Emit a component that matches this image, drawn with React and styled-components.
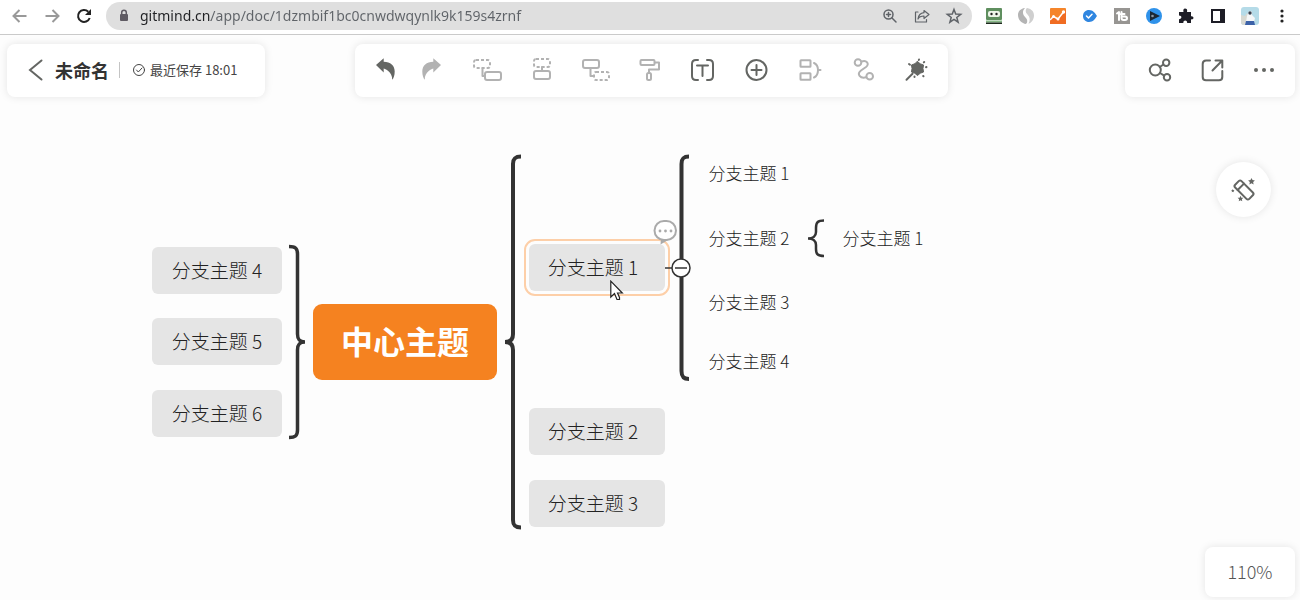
import React from "react";
import styled, { createGlobalStyle, css } from "styled-components";

const GlobalStyle = createGlobalStyle`
  *, *::before, *::after { box-sizing: border-box; }
  html, body, #root { height: 100%; }
  body {
    margin: 0;
    background: #fdfdfd;
    color: #222;
    font-family: "Noto Sans CJK SC", "Noto Sans", sans-serif;
  }
  button { font: inherit; }
`;

const Page = styled.div`
  display: flex;
  flex-direction: column;
  min-height: 100%;
`;

/* ---------- browser bar ---------- */

const BrowserBar = styled.header`
  display: flex;
  align-items: center;
  gap: 6px;
  height: 35px;
  padding: 0 2px 2px 4px;
  background: #fff;
  border-bottom: 1px solid #cacaca;
`;

const Cluster = styled.div`
  display: flex;
  align-items: center;
`;

const ChromeButton = styled.button`
  display: flex;
  align-items: center;
  justify-content: center;
  width: 32px;
  height: 28px;
  padding: 0;
  border: 0;
  background: none;
  color: ${(p) => p.$color || "#5f6368"};
`;

const Omnibox = styled.div`
  display: flex;
  flex: 1;
  align-items: center;
  min-width: 0;
  height: 28px;
  padding: 0 2px 0 10px;
  border-radius: 14px;
  background: #dfdfdf;
`;

const Address = styled.input`
  flex: 1;
  min-width: 0;
  height: 24px;
  margin-left: 8px;
  padding: 0 0 2px;
  border: 0;
  outline: 0;
  background: linear-gradient(90deg, #202124 71px, #5f6368 71px);
  background-clip: text;
  -webkit-text-fill-color: transparent;
  color: #5f6368;
  font-family: "Noto Sans", sans-serif;
  font-size: 14px;
`;

/* ---------- editor ---------- */

const Editor = styled.main`
  position: relative;
  flex: 1;
  overflow: hidden;
`;

const floating = css`
  background: #fff;
  box-shadow: 0 0 8px rgba(0, 0, 0, 0.1);
`;

const TopBars = styled.div`
  position: absolute;
  top: 9px;
  left: 7px;
  right: 5px;
  display: flex;
  justify-content: space-between;
`;

const Side = styled.div`
  display: flex;
  flex: 1 1 0;
  justify-content: ${(p) => (p.$end ? "flex-end" : "flex-start")};
`;

const Card = styled.div`
  ${floating}
  display: flex;
  align-items: center;
  height: 53px;
  padding: ${(p) => p.$pad};
  border-radius: 8px;
`;

const ToolButton = styled.button`
  display: flex;
  align-items: center;
  justify-content: center;
  width: ${(p) => p.$width || 54}px;
  height: 40px;
  padding: 0;
  border: 0;
  background: none;
  color: #646663;

  &:disabled { color: #b2b2b2; }
`;

const DocTitle = styled.h1`
  margin: 0 10px 0 6px;
  color: #333;
  font-size: 18px;
  font-weight: 700;
  line-height: 24px;
`;

const Separator = styled.span`
  width: 1px;
  height: 16px;
  margin-right: 12px;
  background: #c4c4c4;
`;

const SaveState = styled.span`
  display: flex;
  align-items: center;
  gap: 4px;
  color: #444;
  font-size: 13px;
  font-weight: 400;
  line-height: 20px;
`;

const MagicButton = styled.button`
  ${floating}
  position: absolute;
  top: 127px;
  right: 29px;
  display: flex;
  align-items: center;
  justify-content: center;
  width: 55px;
  height: 55px;
  padding: 0;
  border: 0;
  border-radius: 50%;
  color: #646663;
`;

const ZoomButton = styled.button`
  ${floating}
  position: absolute;
  right: 5px;
  bottom: 3px;
  width: 90px;
  height: 50px;
  padding: 0 0 2px;
  border: 0;
  border-radius: 8px;
  color: #555;
  font-size: 18px;
  font-weight: 300;
`;

/* ---------- mind map ---------- */

const Canvas = styled.div`
  position: absolute;
  inset: 0;
`;

const Lines = styled.svg`
  position: absolute;
  top: 0;
  left: 0;
  width: 100%;
  height: 100%;
`;

const kinds = {
  root: css`
    width: 184px;
    height: 76px;
    padding-bottom: 4px;
    border-radius: 9px;
    background: #f58220;
    color: #fff;
    font-size: 32px;
    font-weight: 700;
  `,
  branch: css`
    width: 130px;
    height: 47px;
    padding-bottom: 2px;
    border-radius: 6px;
    background: #e5e5e5;
    font-size: 19px;
    font-weight: 300;
  `,
  leaf: css`
    width: 82px;
    height: 24px;
    font-size: 17px;
    font-weight: 300;
  `,
};

const Node = styled.div`
  position: absolute;
  left: ${(p) => p.$x}px;
  top: ${(p) => p.$y}px;
  display: flex;
  align-items: center;
  justify-content: center;
  white-space: nowrap;
  ${(p) => kinds[p.$kind]}
  ${(p) =>
    p.$foldable &&
    css`
      width: 136px;
      padding-right: 8px;
    `}
  ${(p) =>
    p.$selected &&
    css`
      outline: 2px solid #fdcfa8;
      outline-offset: 3px;
    `}
`;

const Overlay = styled.svg`
  position: absolute;
  left: ${(p) => p.$x}px;
  top: ${(p) => p.$y}px;
`;

/* ---------- icons, drawn around their own centre ---------- */

const Icon = ({ size = 32, w = 2, children }) => (
  <svg
    width={size}
    height={size}
    viewBox={`${-size / 2} ${-size / 2} ${size} ${size}`}
    fill="none"
    stroke="currentColor"
    strokeWidth={w}
    strokeLinecap="round"
    strokeLinejoin="round"
    aria-hidden="true"
  >
    {children}
  </svg>
);

const starPoints = (cx, cy, r, n = 5, inner = 0.48) =>
  Array.from({ length: n * 2 }, (_, i) => {
    const a = (Math.PI * i) / n - Math.PI / 2;
    const k = i % 2 ? r * inner : r;
    return `${(cx + k * Math.cos(a)).toFixed(2)},${(cy + k * Math.sin(a)).toFixed(2)}`;
  }).join(" ");

const UNDO =
  "M-9-5L-1.3-11.8V-8.3C5.5-8.3 9.7-4.5 9.7 1.5C9.7 5.5 8.6 8.3 7.2 9.7C7.6 2-.2-1.6-1.3-1.6V2.4Z";

const tools = [
  { name: "撤销", width: 40, icon: <path d={UNDO} fill="currentColor" stroke="none" /> },
  {
    name: "重做",
    off: true,
    icon: <path d={UNDO} transform="scale(-1 1)" fill="currentColor" stroke="none" />,
  },
  {
    name: "子主题",
    off: true,
    icon: (
      <>
        <rect x="-12" y="-10" width="16" height="8" rx="2" strokeDasharray="3 2" strokeLinecap="butt" />
        <path d="M-3.500-2V6H-1" />
        <rect x="-1" y="2" width="16" height="8" rx="2" />
      </>
    ),
  },
  {
    name: "上方主题",
    off: true,
    icon: (
      <>
        <rect x="-6" y="-11" width="16" height="8" rx="2" strokeDasharray="3 2" strokeLinecap="butt" />
        <path d="M2-3V1" />
        <rect x="-6" y="1" width="16" height="8" rx="2" />
      </>
    ),
  },
  {
    name: "父主题",
    off: true,
    icon: (
      <>
        <rect x="-11" y="-10" width="16" height="8" rx="2" />
        <path d="M-3.500-2V6H-.5" />
        <rect x="0" y="2" width="15" height="8" rx="2" strokeDasharray="3 2" strokeLinecap="butt" />
      </>
    ),
  },
  {
    name: "格式刷",
    off: true,
    icon: (
      <>
        <rect x="-7.500" y="-10" width="14" height="5" rx="1" />
        <path d="M7-7.500H11V-.5H1V3" />
        <rect x="-1" y="3" width="4" height="7" rx="1.500" />
      </>
    ),
  },
  {
    name: "外框",
    icon: (
      <>
        <path d="M-4-10H-6Q-10-10-10-6V6Q-10 10-6 10H-4M5-10H7Q11-10 11-6V6Q11 10 7 10H5" />
        <path d="M-5-4.500H6M.5-4.500V6" />
      </>
    ),
  },
  {
    name: "插入",
    icon: (
      <>
        <circle cx=".5" cy="0" r="10" />
        <path d="M-4.500 0H5.500M.5-5V5" />
      </>
    ),
  },
  {
    name: "概要",
    off: true,
    icon: (
      <>
        <rect x="-9.500" y="-9.700" width="10" height="6.500" rx=".5" />
        <rect x="-9.500" y="3.300" width="10" height="6.500" rx=".5" />
        <path d="M4-7C7.500-5.500 8-2 8 0C8 2 7.500 6 4 7.500M8 0H10.500" />
      </>
    ),
  },
  {
    name: "关系线",
    off: true,
    icon: (
      <>
        <circle cx="-6" cy="-7.500" r="3.300" />
        <circle cx="5.700" cy="6.300" r="3.300" />
        <path d="M-2.500-8.500C2.500-10.500 6-6 2-3L-3 .5C-7.500 4-4 9 2.300 7.300" />
      </>
    ),
  },
  {
    name: "主题风格",
    width: 50,
    icon: (
      <>
        <path d="M-9.500 9.700L-3.500 3.700" />
        <polygon points={starPoints(1.5, -1.5, 7, 6, 0.78)} fill="currentColor" strokeWidth="1" />
        <path d="M3-10.500L2.800-10M10.500-3L10-2.800M7.500 6.300L7.200 6M-7-6L-6-5.300M-1.500 6.500V7M8.200-8L7.800-7.600" />
      </>
    ),
  },
];

const actions = [
  {
    name: "分享",
    icon: (
      <>
        <circle cx="-4.700" cy="0" r="5.500" />
        <circle cx="6.200" cy="-7.300" r="3.200" />
        <circle cx="7" cy="7.300" r="3.200" />
        <path d="M-.2-3L3.400-5.500M0 3L4.200 5.600" />
      </>
    ),
  },
  {
    name: "导出",
    icon: (
      <>
        <path d="M-2-9.500H-6Q-9.300-9.500-9.300-6V7Q-9.300 10.300-6 10.300H7Q10.300 10.300 10.300 7V1" />
        <path d="M.5 .5L10-9.300M3.500-9.500H10.300V-2.500" />
      </>
    ),
  },
  {
    name: "更多",
    icon: (
      <g fill="currentColor" stroke="none">
        <circle cx="-8" cy="0" r="2" />
        <circle cx="0" cy="0" r="2" />
        <circle cx="8" cy="0" r="2" />
      </g>
    ),
  },
];

const extensions = [
  {
    name: "RoboForm",
    icon: (
      <g stroke="none">
        <rect x="-8" y="-8" width="16" height="12" rx="1" fill="#5f8f5f" />
        <rect x="-6" y="-5" width="12" height="6" rx="2" fill="#eef5ea" />
        <circle cx="-2.500" cy="-2" r="1.200" fill="#222" />
        <circle cx="2.500" cy="-2" r="1.200" fill="#222" />
        <rect x="-8" y="4.500" width="16" height="2" fill="#86b886" />
        <rect x="-8" y="6.500" width="16" height="1.500" fill="#1c2b1c" />
      </g>
    ),
  },
  {
    name: "SimilarWeb",
    icon: (
      <g stroke="none">
        <path d="M-1-8C-6-7.500-8-4-8-1C-8 4-4 7.500 0 8C2 6 1.500 3.500-.5 1.500C-3.500-1.500-4-5-1-8Z" fill="#b4b4b4" />
        <path d="M1-8C6-7 8-4 8-.5C8 3 6 6.500 2.500 7.700C4.500 4 4 1 1.500-1.500C-1-4-.5-6.500 1-8Z" fill="#cfcfcf" />
      </g>
    ),
  },
  {
    name: "Analytics",
    icon: (
      <g>
        <rect x="-8" y="-8" width="16" height="16" rx="1" fill="#f5852a" stroke="none" />
        <path d="M-8 4L-4 0L0 3L7-5L8-6V8H-8Z" fill="#f06c22" stroke="none" />
        <path d="M-7.500 3.500L-4.500 .5L0 3L5.500-4" stroke="#fff" strokeWidth="1.500" />
        <g fill="#fff" stroke="none">
          <circle cx="-4.500" cy=".5" r="1.500" />
          <circle cx="0" cy="3" r="1.500" />
          <circle cx="5.500" cy="-4" r="1.700" />
        </g>
      </g>
    ),
  },
  {
    name: "Verified",
    icon: (
      <g>
        <path d="M-1-6C3-6 5-3 7 0C5 3 3 6-1 6C-4.500 6-7 3.500-7 0C-7-3.500-4.500-6-1-6Z" fill="#2f86e0" stroke="none" />
        <path d="M-3.500 0L-1.500 2L2-1.700" stroke="#fff" strokeWidth="1.500" />
      </g>
    ),
  },
  {
    name: "TubeBuddy",
    icon: (
      <g>
        <rect x="-8" y="-8" width="16" height="16" fill="#979592" stroke="none" />
        <path d="M-5-2.500L-3-4V4M-.5-4V2Q-.5 4 1.500 4H3Q5 4 5 2.300Q5 .5 3 .5H-.5M-1.500-2H2.500" stroke="#fff" strokeWidth="2" />
      </g>
    ),
  },
  {
    name: "Video",
    icon: (
      <g stroke="none">
        <circle cx="0" cy="0" r="8" fill="#2f92ea" />
        <path d="M-4-5L6 0L-4 5Z" fill="#1b2733" />
        <circle cx="-1.500" cy="0" r="1.300" fill="#8a97a5" />
      </g>
    ),
  },
  {
    name: "Extensions",
    icon: (
      <path
        d="M-7-4H-2.500C-3.500-8-.5-8-.3-7.200C1-7.500 1.500-5.500 1-4H5V.3C8.300-.3 8.300 4 5 3.300V7H1.200C1.200 3.800-2.700 3.800-2.700 7H-7V3.200C-3.800 3-3.800-.5-7-.5Z"
        fill="#1d1d26"
        stroke="none"
      />
    ),
  },
  {
    name: "Side panel",
    icon: (
      <path d="M-7-7H7V7H-7ZM-5-5V5H2V-5Z" fill="#1d1d26" fillRule="evenodd" stroke="none" />
    ),
  },
  {
    name: "Profile",
    icon: (
      <g stroke="none">
        <rect x="-9" y="-9" width="18" height="18" rx="3" fill="#b5dbe8" />
        <path d="M-9-1L-5 0L-3-3L0 4L-3 9H-6Q-9 9-9 6Z" fill="#d8d9d2" />
        <path d="M-1.500-4Q0-6 2-4V-1L5 2L4 6H-4L-3 0Z" fill="#f5f7f8" />
        <circle cx="0" cy="-3" r="1.700" fill="#39414f" />
        <path d="M-4 5L4 5L5 9H-5Z" fill="#3c62a8" />
      </g>
    ),
  },
  {
    name: "Menu",
    icon: (
      <g fill="#222" stroke="none">
        <circle cx="0" cy="-5" r="1.600" />
        <circle cx="0" cy="0" r="1.600" />
        <circle cx="0" cy="5" r="1.600" />
      </g>
    ),
  },
];

/* Node positions are canvas coordinates. */
const nodes = [
  { text: "中心主题", kind: "root", x: 313, y: 269 },
  { text: "分支主题 4", kind: "branch", x: 152, y: 212 },
  { text: "分支主题 5", kind: "branch", x: 152, y: 283 },
  { text: "分支主题 6", kind: "branch", x: 152, y: 355 },
  { text: "分支主题 1", kind: "branch", x: 529, y: 209, foldable: true, selected: true },
  { text: "分支主题 2", kind: "branch", x: 529, y: 373, foldable: true },
  { text: "分支主题 3", kind: "branch", x: 529, y: 445, foldable: true },
  { text: "分支主题 1", kind: "leaf", x: 708, y: 125 },
  { text: "分支主题 2", kind: "leaf", x: 708, y: 190 },
  { text: "分支主题 3", kind: "leaf", x: 708, y: 254 },
  { text: "分支主题 4", kind: "leaf", x: 708, y: 313 },
  { text: "分支主题 1", kind: "leaf", x: 842, y: 190 },
];

function BrowserChrome() {
  return (
    <BrowserBar>
      <Cluster>
        <ChromeButton aria-label="后退" $color="#999">
          <Icon size={20}>
            <path d="M6.500 0H-6M-.5-6L-6.500 0L-.5 6" strokeLinecap="butt" strokeLinejoin="miter" />
          </Icon>
        </ChromeButton>
        <ChromeButton aria-label="前进" $color="#999">
          <Icon size={20}>
            <path d="M-6.500 0H6M.5-6L6.500 0L.5 6" strokeLinecap="butt" strokeLinejoin="miter" />
          </Icon>
        </ChromeButton>
        <ChromeButton aria-label="刷新" $color="#222">
          <Icon size={20}>
            <path d="M5.700 2A6 6 0 1 1 4.300-4.300" strokeLinecap="butt" />
            <path d="M7-7V-1H1Z" fill="currentColor" stroke="none" />
          </Icon>
        </ChromeButton>
      </Cluster>
      <Omnibox>
        <Icon size={16} w={1.5}>
          <rect x="-4" y="-2" width="8" height="7" rx="1" fill="#5f5b63" stroke="none" />
          <path d="M-2.300-2V-3.500A2.300 2.300 0 0 1 2.300-3.500V-2" stroke="#5f5b63" />
        </Icon>
        <Address
          type="text"
          aria-label="地址"
          defaultValue="gitmind.cn/app/doc/1dzmbif1bc0cnwdwqynlk9k159s4zrnf"
        />
        <ChromeButton aria-label="缩放">
          <Icon size={20} w={1.5}>
            <circle cx="-1.500" cy="-1.500" r="4.500" />
            <path d="M2 2L6 6M-3.500-1.500H.5M-1.500-3.500V.5" />
          </Icon>
        </ChromeButton>
        <ChromeButton aria-label="共享">
          <Icon size={20} w={1.2}>
            <path d="M-4-4H-6.500V6H4.500V3.500" />
            <path d="M2-5.500L7-1.500L2 2.500V0C-1 0-3 1-4 3C-3.500-1-1-3 2-3.300Z" />
          </Icon>
        </ChromeButton>
        <ChromeButton aria-label="收藏">
          <Icon size={20} w={1.5}>
            <polygon points={starPoints(0, 0.5, 7, 5, 0.42)} strokeLinejoin="miter" />
          </Icon>
        </ChromeButton>
      </Omnibox>
      <Cluster>
        {extensions.map((e) => (
          <ChromeButton key={e.name} aria-label={e.name}>
            <Icon size={20}>{e.icon}</Icon>
          </ChromeButton>
        ))}
      </Cluster>
    </BrowserBar>
  );
}

function MindMap() {
  return (
    <Canvas>
      <Lines fill="none" stroke="#333" strokeWidth="4" aria-hidden="true">
        <path d="M289 211.500C295 211.500 297.500 213 297.500 219V299C297.500 304 299 307 305 307C299 307 297.500 310 297.500 315V395C297.500 401 295 402.500 289 402.500" strokeWidth="3.500" />
        <path d="M521 121.500C515 121.500 513 123.500 513 129V299C513 304 511 307 505 307C511 307 513 310 513 315V485C513 490.500 515 492.500 521 492.500" />
        <path d="M689 121.500C683.500 121.500 681.500 123.500 681.500 129V336C681.500 342 683.500 344 689 344" />
        <path d="M824 185.500C818 185.500 816 187 816 193V197C816 201 813 203.500 808 203.500C813 203.500 816 206 816 210V214C816 219.500 818 221 824 221" strokeWidth="2.500" />
      </Lines>
      {nodes.map((n) => (
        <Node
          key={`${n.x}-${n.y}`}
          $kind={n.kind}
          $x={n.x}
          $y={n.y}
          $foldable={n.foldable}
          $selected={n.selected}
        >
          {n.text}
        </Node>
      ))}
      <Overlay $x={665} $y={222} width="28" height="22" fill="none" stroke="#333" aria-hidden="true">
        <path d="M0 11H7" strokeWidth="1.500" />
        <circle cx="16" cy="11" r="9" fill="#fff" strokeWidth="1.500" />
        <path d="M10 11H22" strokeWidth="1.500" />
      </Overlay>
      <Overlay $x={652} $y={184} width="28" height="28" fill="none" aria-hidden="true">
        <path d="M9 20L8.500 25.500L16 21Z" fill="#aaa" />
        <rect x="2.500" y="2" width="21.500" height="19" rx="9.500" fill="#fff" stroke="#aaa" strokeWidth="2" />
        <g fill="#aaa">
          <circle cx="8" cy="12" r="1.400" />
          <circle cx="13.500" cy="12" r="1.400" />
          <circle cx="19" cy="12" r="1.400" />
        </g>
      </Overlay>
      <Overlay $x={610} $y={245} width="14" height="22" aria-hidden="true">
        <path
          d="M.8 1.200V17L4.500 13.500L7 19.500H9.500V17.500L7.500 13H12.300Z"
          fill="#fff"
          stroke="#222"
          strokeWidth="1.200"
        />
      </Overlay>
    </Canvas>
  );
}

export default function App() {
  return (
    <Page>
      <GlobalStyle />
      <BrowserChrome />
      <Editor>
        <MindMap />
        <TopBars>
          <Side>
            <Card $pad="0 28px 2px 14px">
              <ToolButton $width={28} aria-label="返回">
                <Icon size={28}>
                  <path d="M6.500-9.500L-5 0L6.500 9.500" strokeLinejoin="miter" />
                </Icon>
              </ToolButton>
              <DocTitle>未命名</DocTitle>
              <Separator />
              <SaveState>
                <Icon size={14} w={1}>
                  <circle cx="0" cy="0" r="5.500" />
                  <path d="M-2.500 0L-.7 2L3-2" />
                </Icon>
                最近保存 18:01
              </SaveState>
            </Card>
          </Side>
          <Card $pad="0 7px 2px 10px">
            {tools.map((t) => (
              <ToolButton key={t.name} aria-label={t.name} $width={t.width} disabled={t.off}>
                <Icon>{t.icon}</Icon>
              </ToolButton>
            ))}
          </Card>
          <Side $end>
            <Card $pad="0 5px 2px 9px">
              {actions.map((a) => (
                <ToolButton key={a.name} aria-label={a.name} $width={52}>
                  <Icon>{a.icon}</Icon>
                </ToolButton>
              ))}
            </Card>
          </Side>
        </TopBars>
        <MagicButton aria-label="美化">
          <Icon>
            <g transform="rotate(45)">
              <rect x="-10" y="-4.500" width="20" height="9" rx="2" />
              <path d="M-4.500-4.500V4.500" />
            </g>
            <g fill="currentColor" stroke="none">
              <polygon points={starPoints(7.5, -8.5, 3.6)} />
              <polygon points={starPoints(-3.5, 8.8, 3)} />
              <polygon points={starPoints(-11.2, 0.8, 1.8)} />
            </g>
          </Icon>
        </MagicButton>
        <ZoomButton aria-label="缩放比例 110%">110%</ZoomButton>
      </Editor>
    </Page>
  );
}
